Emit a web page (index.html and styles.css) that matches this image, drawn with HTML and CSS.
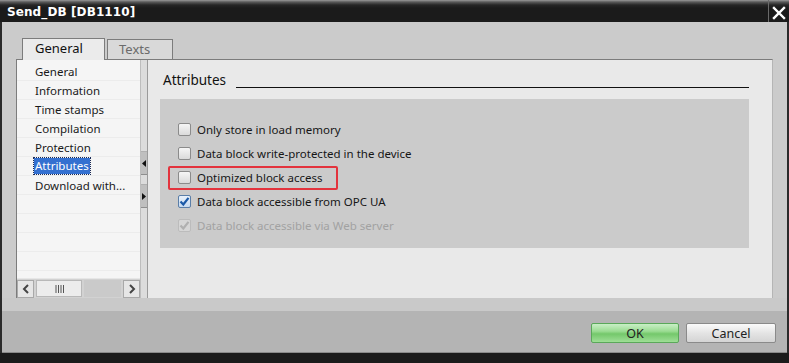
FILE: index.html
```html
<!DOCTYPE html>
<html>
<head>
<meta charset="utf-8">
<link rel="stylesheet" href="styles.css">
</head>
<body>
<div class="window">
  <div class="titlebar">
    <span class="title">Send_DB [DB1110]</span>
    <span class="close">
      <svg width="14" height="14" viewBox="0 0 14 14"><path d="M2 2 L12 12 M12 2 L2 12" stroke="#fff" stroke-width="2.4" stroke-linecap="square"/></svg>
    </span>
  </div>
  <div class="body">
    <div class="tabs">
      <div class="tab active">General</div>
      <div class="tab">Texts</div>
    </div>
    <div class="panel">
      <div class="nav">
        <div class="navlist">
          <div class="item">General</div>
          <div class="item">Information</div>
          <div class="item">Time stamps</div>
          <div class="item">Compilation</div>
          <div class="item">Protection</div>
          <div class="item"><span class="sel">Attributes</span></div>
          <div class="item">Download with...</div>
          <div class="item"></div>
          <div class="item"></div>
          <div class="item"></div>
          <div class="item"></div>
        </div>
        <div class="hscroll">
          <div class="sbtn"><svg width="8" height="10" viewBox="0 0 8 10"><path d="M6 1 L2 5 L6 9" fill="none" stroke="#444" stroke-width="2"/></svg></div>
          <div class="thumb"><svg width="9" height="8" viewBox="0 0 9 8"><path d="M1 0V8M3.5 0V8M6 0V8M8.5 0V8" stroke="#555" stroke-width="1"/></svg></div>
          <div class="track"></div>
          <div class="sbtn"><svg width="8" height="10" viewBox="0 0 8 10"><path d="M2 1 L6 5 L2 9" fill="none" stroke="#444" stroke-width="2"/></svg></div>
        </div>
      </div>
      <div class="splitter">
        <div class="sgap1"></div>
        <div class="sseg"><svg width="4" height="7" viewBox="0 0 4 7"><path d="M4 0 L0 3.5 L4 7Z" fill="#111"/></svg></div>
        <div class="sgap2"></div>
        <div class="sseg"><svg width="4" height="7" viewBox="0 0 4 7"><path d="M0 0 L4 3.5 L0 7Z" fill="#111"/></svg></div>
      </div>
      <div class="content">
        <div class="heading">
          <span class="htext">Attributes</span>
          <span class="hline"></span>
        </div>
        <div class="group">
          <div class="row"><span class="cb"></span><span>Only store in load memory</span></div>
          <div class="row"><span class="cb"></span><span>Data block write-protected in the device</span></div>
          <div class="row hl"><span class="cb"></span><span>Optimized block access</span></div>
          <div class="row"><span class="cb checked"><svg width="11" height="11" viewBox="0 0 11 11"><path d="M1.5 5.5 L4.3 8.5 L9.5 1.8" fill="none" stroke="#1c5aa8" stroke-width="2.2"/></svg></span><span>Data block accessible from OPC UA</span></div>
          <div class="row disabled"><span class="cb dis"><svg width="11" height="11" viewBox="0 0 11 11"><path d="M1.5 5.5 L4.3 8.5 L9.5 1.8" fill="none" stroke="#b0b0b0" stroke-width="2.2"/></svg></span><span>Data block accessible via Web server</span></div>
        </div>
      </div>
    </div>
    <div class="strip"></div>
    <div class="buttons">
      <div class="btn ok">OK</div>
      <div class="btn cancel">Cancel</div>
    </div>
  </div>
  <div class="bottom"></div>
</div>
</body>
</html>
```

FILE: styles.css
```css
* { box-sizing: border-box; }
html, body { margin: 0; padding: 0; }
body {
  width: 789px;
  height: 363px;
  overflow: hidden;
  background: #1b1b1b;
  font-family: "Noto Sans", "DejaVu Sans", sans-serif;
}
.window {
  width: 789px;
  height: 363px;
  display: flex;
  flex-direction: column;
}
.titlebar {
  height: 22px;
  flex: none;
  display: flex;
  align-items: center;
  justify-content: space-between;
  background: linear-gradient(#9a9a9a 0, #5a5a5a 2px, #262626 5px, #1b1b1b 8px, #1b1b1b 100%);
  padding-left: 7px;
}
.title {
  color: #fff;
  font-family: "DejaVu Sans", sans-serif;
  font-weight: bold;
  font-size: 12px;
  letter-spacing: 0.1px;
  padding-top: 2px;
}
.close {
  width: 21px;
  height: 22px;
  display: flex;
  align-items: center;
  justify-content: center;
  border-left: 1px solid #6a6a6a;
  padding-top: 4px;
}
.body {
  flex: 1;
  display: flex;
  flex-direction: column;
  background: #cbcbcb;
  border-left: 2px solid #2a2a2a;
  border-right: 2px solid #2a2a2a;
  padding-top: 16px;
}
.tabs {
  display: flex;
  align-items: flex-end;
  height: 21px;
  padding-left: 20px;
  gap: 2px;
  position: relative;
  z-index: 1;
}
.tab {
  height: 20px;
  border: 1px solid #7c7c7c;
  border-bottom: none;
  font-size: 13px;
  display: flex;
  align-items: center;
  color: #6b6b6b;
  background: #d9d9d9;
  padding: 0 12px 2px 11px;
  width: 66px;
}
.tab.active {
  height: 22px;
  width: 83px;
  background: #ebebeb;
  color: #111;
  padding-left: 12px;
  padding-bottom: 3px;
  margin-bottom: -1px;
}
.panel {
  margin-left: 14px;
  width: 757px;
  height: 239px;
  border: 1px solid #7c7c7c;
  border-bottom: none;
  border-right: 1px solid #b5b5b5;
  background: #e9e9e9;
  display: flex;
}
.nav {
  width: 123px;
  display: flex;
  flex-direction: column;
  background: #f5f5f5;
}
.navlist {
  flex: 1;
  padding-top: 2px;
}
.item {
  height: 19px;
  border-bottom: 1px solid #ececec;
  font-size: 11.5px;
  color: #1a1a1a;
  padding-left: 18px;
  display: flex;
  align-items: center;
}
.sel {
  background: #3470d0;
  color: #fff;
  outline: 1px dotted #1a2a55;
  padding: 0 1px;
  margin-left: -1px;
  line-height: 16px;
}
.hscroll {
  height: 20px;
  display: flex;
  background: #d2d2d2;
  border-top: 1px solid #e6e6e6;
  padding: 1px 0 1px 0;
  gap: 2px;
}
.sbtn {
  width: 17px;
  height: 18px;
  border: 1px solid #a9a9a9;
  background: #e6e6e6;
  display: flex;
  align-items: center;
  justify-content: center;
}
.thumb {
  width: 46px;
  border: 1px solid #b8b8b8;
  background: #ececec;
  display: flex;
  align-items: center;
  justify-content: center;
}
.track { flex: 1; background: #cacaca; }
.splitter {
  width: 8px;
  display: flex;
  flex-direction: column;
  align-items: stretch;
  background: #dcdcdc;
  border-left: 1px solid #bdbdbd;
  border-right: 1px solid #9a9a9a;
}
.sgap1 { height: 92px; border-bottom: 1px solid #b0b0b0; }
.sgap2 { height: 10px; border-bottom: 1px solid #b0b0b0; }
.sseg {
  height: 23px;
  background: #bfbfbf;
  border-bottom: 1px solid #8e8e8e;
  display: flex;
  align-items: center;
  justify-content: center;
}
.content {
  flex: 1;
  padding: 11px 23px 0 12px;
}
.heading {
  display: flex;
  align-items: flex-end;
  height: 18px;
}
.htext {
  font-size: 13.5px;
  color: #111;
  line-height: 18px;
  padding-left: 3px;
}
.hline {
  flex: 1;
  height: 1px;
  background: #111;
  margin-left: 10px;
  margin-bottom: 1px;
}
.group {
  margin-top: 10px;
  height: 149px;
  background: #cbcbcb;
  padding: 19px 0 0 18px;
}
.row {
  height: 24px;
  display: flex;
  align-items: center;
  font-size: 11.5px;
  color: #161616;
  gap: 6px;
  padding-bottom: 1px;
}
.row.hl {
  width: 170px;
  margin-left: -10px;
  padding-left: 8px;
  border: 2px solid #e3333d;
  border-radius: 2px;
}
.row.disabled { color: #a2a2a2; }
.cb {
  width: 13px;
  height: 13px;
  border: 1px solid #8b8b8b;
  border-radius: 2px;
  background: linear-gradient(#f6f6f6, #dadada);
  display: flex;
  align-items: center;
  justify-content: center;
  flex: none;
}
.cb.checked {
  background: linear-gradient(#e8f1fb, #c7daf0);
  border-color: #5a7ea8;
}
.cb.dis {
  border-color: #bcbcbc;
  background: #d6d6d6;
}
.strip {
  height: 13px;
  background: #c9c9c9;
}
.buttons {
  flex: 1;
  background: #b4b4b4;
  display: flex;
  justify-content: flex-end;
  align-items: flex-start;
  padding: 12px 11px 0 0;
  gap: 7px;
  border-bottom: 1px solid #8a8a8a;
}
.btn {
  width: 88px;
  height: 20px;
  font-size: 12.5px;
  display: flex;
  align-items: center;
  justify-content: center;
  color: #222;
  border-radius: 2px;
}
.ok {
  border: 1px solid #5aa85a;
  background: linear-gradient(#c9efc6 0, #9bdc93 40%, #74c86b 55%, #9ede96 100%);
}
.cancel {
  width: 90px;
  border: 1px solid #8a8a8a;
  background: linear-gradient(#fbfbfb, #e4e4e4 50%, #d4d4d4 100%);
}
.bottom {
  height: 10px;
  flex: none;
  background: #1b1b1b;
}
```
